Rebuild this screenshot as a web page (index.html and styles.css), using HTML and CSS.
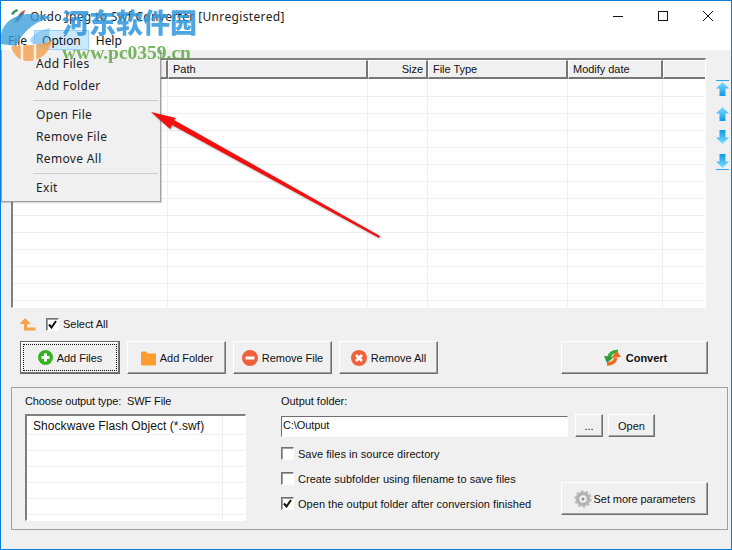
FILE: index.html
```html
<!DOCTYPE html>
<html lang="en">
<head>
<meta charset="utf-8">
<title>Okdo Jpeg to Swf Converter</title>
<link rel="stylesheet" href="styles.css">
</head>
<body>
<div class="window">
  <header class="titlebar">
    <svg class="app-icon" width="16" height="16" viewBox="0 0 16 16"><path d="M1 6 Q3 2 7 1 L8 3 Q5 4 3 7Z" fill="#2f9a5a"/><path d="M5 12 L11 4 L14 6 L8 14Z" fill="#5a6a80"/><path d="M11 4 L15 2 L14 6Z" fill="#c9503c"/><path d="M5 12 L3 15 L8 14Z" fill="#e0a040"/></svg>
    <span class="title">Okdo Jpeg to Swf Converter [Unregistered]</span>
    <div class="win-controls">
      <svg class="win-btn" width="10" height="10" viewBox="0 0 10 10"><path d="M0 5.500H10" stroke="#111" fill="none"/></svg>
      <svg class="win-btn" width="10" height="10" viewBox="0 0 10 10"><rect x=".5" y=".5" width="9" height="9" stroke="#111" fill="none"/></svg>
      <svg class="win-btn" width="10" height="10" viewBox="0 0 10 10"><path d="M0 0L10 10M10 0L0 10" stroke="#111" fill="none"/></svg>
    </div>
  </header>
  <nav class="menubar">
    <span class="menu-item">File</span>
    <span class="menu-item is-open">Option</span>
    <span class="menu-item">Help</span>
  </nav>
  <main class="main">
    <section class="list-row">
      <div class="file-list">
        <div class="list-head">
          <div class="col col-name"></div>
          <div class="col col-path">Path</div>
          <div class="col col-size">Size</div>
          <div class="col col-type">File Type</div>
          <div class="col col-date">Modify date</div>
          <div class="col col-rest"></div>
        </div>
        <div class="list-body">
          <div class="cell col-name"></div>
          <div class="cell col-path"></div>
          <div class="cell col-size"></div>
          <div class="cell col-type"></div>
          <div class="cell col-date"></div>
          <div class="cell col-rest"></div>
        </div>
      </div>
      <div class="move-btns">
        <svg width="13" height="17" viewBox="0 0 13 17"><defs><linearGradient id="up" x1="0" y1="0" x2="0" y2="1"><stop offset="0" stop-color="#7fe0ff"/><stop offset="1" stop-color="#0f97ea"/></linearGradient></defs><path d="M0 .5H13" stroke="#2aa8ee"/><path d="M6.500 2L13 8.500H9.500V16H3.500V8.500H0Z" fill="url(#up)"/></svg>
        <svg width="13" height="16" viewBox="0 0 13 16"><path d="M6.500 1L13 7.500H9.500V15H3.500V7.500H0Z" fill="url(#up)"/></svg>
        <svg width="13" height="16" viewBox="0 0 13 16"><defs><linearGradient id="dn" x1="0" y1="0" x2="0" y2="1"><stop offset="0" stop-color="#0f97ea"/><stop offset="1" stop-color="#7fe0ff"/></linearGradient></defs><path d="M6.500 15L13 8.500H9.500V1H3.500V8.500H0Z" fill="url(#dn)"/></svg>
        <svg width="13" height="17" viewBox="0 0 13 17"><path d="M6.500 15L13 8.500H9.500V1H3.500V8.500H0Z" fill="url(#dn)"/><path d="M0 16.500H13" stroke="#2aa8ee"/></svg>
      </div>
    </section>

    <div class="select-row">
      <svg width="17" height="13" viewBox="0 0 17 13"><path d="M6 0L12 6H8V9.500H16.500V12.500H5V6H0.500Z" fill="#f9a24c"/></svg>
      <label class="check"><span class="box is-checked"><svg width="9" height="9" viewBox="0 0 9 9"><path d="M1 4.500L3.500 7.500L8 1" stroke="#111" stroke-width="2" fill="none"/></svg></span>Select All</label>
    </div>

    <div class="action-row">
      <div class="btn-group">
        <button class="btn btn-default"><span class="focus"><svg width="15" height="15" viewBox="0 0 15 15"><circle cx="7.500" cy="7.500" r="7.500" fill="#35b21f"/><path d="M7.500 3.500V11.500M3.500 7.500H11.500" stroke="#fff" stroke-width="3"/></svg>Add Files</span></button>
        <button class="btn"><svg width="16" height="16" viewBox="0 0 16 16"><path d="M1 2.500Q1 1.500 2 1.500H6L7.500 3.500H15Q16 3.500 16 4.500V14.500Q16 15.500 15 15.500H2Q1 15.500 1 14.500Z" fill="#fb9d2f"/></svg>Add Folder</button>
        <button class="btn"><svg width="16" height="16" viewBox="0 0 16 16"><circle cx="8" cy="8" r="8" fill="#f0603a"/><path d="M3.500 8H12.500" stroke="#fff" stroke-width="3"/></svg>Remove File</button>
        <button class="btn"><svg width="16" height="16" viewBox="0 0 16 16"><circle cx="8" cy="8" r="8" fill="#f0603a"/><path d="M5 5L11 11M11 5L5 11" stroke="#fff" stroke-width="2.800"/></svg>Remove All</button>
      </div>
      <button class="btn btn-wide btn-bold"><svg width="20" height="19" viewBox="0 0 20 19"><path d="M16 3.500Q9 3 7 9" stroke="#2fae3a" stroke-width="3.500" fill="none"/><path d="M2 8L12 9L5 15Z" fill="#2a9c36"/><path d="M5 16Q12 16 14 10" stroke="#ee6a1e" stroke-width="3.500" fill="none"/><path d="M9 10L19 9L15 3Z" fill="#ee6a1e"/></svg>Convert</button>
    </div>

    <section class="group">
      <div class="output-type">
        <div class="group-label">Choose output type:&nbsp; SWF File</div>
        <div class="type-list">
          <div class="type-col">Shockwave Flash Object (*.swf)</div>
          <div class="type-rest"></div>
        </div>
      </div>
      <div class="output-opts">
        <div class="group-label">Output folder:</div>
        <div class="folder-row">
          <div class="folder-input">C:\Output</div>
          <button class="btn btn-small btn-dots">...</button>
          <button class="btn btn-small btn-open">Open</button>
        </div>
        <div class="opts-bottom">
          <div class="checks">
            <label class="check"><span class="box"></span>Save files in source directory</label>
            <label class="check"><span class="box"></span>Create subfolder using filename to save files</label>
            <label class="check"><span class="box is-checked"><svg width="9" height="9" viewBox="0 0 9 9"><path d="M1 4.500L3.500 7.500L8 1" stroke="#111" stroke-width="2" fill="none"/></svg></span>Open the output folder after conversion finished</label>
          </div>
          <button class="btn btn-wide btn-params"><svg width="18" height="18" viewBox="0 0 18 18"><circle cx="9" cy="9" r="5.500" fill="none" stroke="#b4b4b4" stroke-width="3.500"/><circle cx="9" cy="9" r="7.800" fill="none" stroke="#bdbdbd" stroke-width="2" stroke-dasharray="2.500 2.400"/><circle cx="9" cy="9" r="1.500" fill="#8d8d8d"/></svg>Set more parameters</button>
        </div>
      </div>
    </section>
  </main>

  <div class="drop-menu">
    <div class="drop-item">Add Files</div>
    <div class="drop-item">Add Folder</div>
    <div class="drop-sep"></div>
    <div class="drop-item">Open File</div>
    <div class="drop-item">Remove File</div>
    <div class="drop-item">Remove All</div>
    <div class="drop-sep"></div>
    <div class="drop-item">Exit</div>
  </div>

  <svg class="red-arrow" width="240" height="135" viewBox="0 0 240 135"><path d="M1 1L26 7L24 9L230 125L229 127L22 14L20 18Z" fill="#f01010"/></svg>

  <svg class="wm-logo" width="62" height="62" viewBox="0 0 62 62"><path d="M1 44C-2 28 10 14 30 14C38 14 45 15 52 18C38 20 25 28 16 46Z" fill="#3d9ddc" opacity=".8"/><path d="M30 40C33 34 40 30 50 28L47 50L34 46Z" fill="#5aaee4" opacity=".5"/><path d="M11 47C20 43 38 48 52 40C50 53 40 61 28 61C19 61 14 55 11 47Z" fill="#f3a456" opacity=".85"/><path d="M22 44V61M35 44V61" stroke="#fff" stroke-width="2.500" opacity=".8"/></svg>
  <div class="wm-cn">河东软件园</div>
  <div class="wm-url">www.pc0359.cn</div>
</div>
</body>
</html>
```
FILE: styles.css
```css
* { box-sizing: border-box; }
html, body { margin: 0; padding: 0; }
body { width: 732px; height: 550px; overflow: hidden; font-family: "Liberation Sans", Arial, sans-serif; font-size: 11px; letter-spacing: -.03px; color: #111; }

.window { position: relative; width: 732px; height: 550px; border: 1px solid #0b7fd6; display: flex; flex-direction: column; background: #f0f0f0; overflow: hidden; }

.titlebar { height: 29px; flex: none; background: #fff; display: flex; align-items: center; padding-left: 9px; padding-top: 1px; }
.app-icon { margin-right: 4px; }
.title { font-family: "Noto Sans", sans-serif; font-size: 12px; letter-spacing: .35px; color: #222; white-space: nowrap; }
.win-controls { margin-left: auto; display: flex; gap: 35px; padding-right: 18px; }
.win-btn { display: block; }

.menubar { height: 20px; flex: none; background: #fff; display: flex; font-family: "Noto Sans", sans-serif; font-size: 12px; }
.menu-item { padding: 1px 6px 0; line-height: 18px; border: 1px solid transparent; }
.menu-item.is-open { padding: 1px 7px 0; background: #cce8ff; border-color: #99d1ff; }

.main { flex: 1; padding: 8px 0 0 10px; display: flex; flex-direction: column; }

.list-row { display: flex; height: 250px; flex: none; }
.file-list { width: 695px; height: 250px; flex: none; display: flex; flex-direction: column; background: #fff; border-style: solid; border-width: 2px 1px 1px 2px; border-color: #808080 #fff #fff #808080; }
.list-head { display: flex; height: 19px; flex: none; background: #f0f0f0; }
.col { height: 19px; padding-left: 4px; line-height: 16px; border-style: solid; border-width: 1px 2px 2px 0; border-color: #fff #777 #777 #fff; border-left: 1px solid #fff; white-space: nowrap; }
.col-name { width: 155px; }
.col-path { width: 200px; }
.col-size { width: 60px; text-align: right; padding-right: 3px; }
.col-type { width: 140px; }
.col-date { width: 95px; }
.col-rest { flex: 1; border-right: 0; }
.list-body { flex: 1; display: flex; margin-top: 1px; background: repeating-linear-gradient(to bottom, #fff 0, #fff 16px, #efefef 16px, #efefef 17px); }
.cell { height: 100%; border-right: 1px solid #efefef; }
.cell.col-rest { border-right: 0; }

.move-btns { width: 13px; flex: none; margin-left: 10px; padding-top: 22px; display: flex; flex-direction: column; align-items: flex-start; }
.move-btns svg { display: block; }
.move-btns svg:nth-child(2) { margin-top: 9px; }
.move-btns svg:nth-child(3) { margin-top: 7px; }
.move-btns svg:nth-child(4) { margin-top: 8px; }

.select-row { display: flex; align-items: center; height: 16px; margin: 8px 0 0 8px; }
.select-row .check { margin-left: 10px; }
.check { display: flex; align-items: center; white-space: nowrap; }
.box { width: 13px; height: 13px; margin-right: 4px; flex: none; display: flex; align-items: center; justify-content: center; background: #fff; border-style: solid; border-width: 1px; border-color: #707070 #fff #fff #707070; box-shadow: inset 1px 1px 0 #a0a0a0; }
.box.is-checked svg { display: block; }

.action-row { display: flex; justify-content: space-between; margin-top: 9px; padding: 0 23px 0 9px; height: 33px; flex: none; }
.btn-group { display: flex; gap: 7px; }
.btn { width: 99px; height: 33px; padding: 0; display: inline-flex; align-items: center; justify-content: center; gap: 4px; font: inherit; letter-spacing: inherit; color: #111; background: #f0f0f0; border-style: solid; border-width: 1px; border-color: #fff #6e6e6e #6e6e6e #fff; box-shadow: inset -1px -1px 0 #a0a0a0; }
.btn svg { flex: none; }
.btn-default { width: 100px; border: 1px solid #666; box-shadow: inset -1px -1px 0 #777, inset 1px 1px 0 #fff; padding: 2px; }
.focus { width: 100%; height: 100%; border: 1px dotted #111; display: flex; align-items: center; justify-content: center; gap: 4px; }
.btn-wide { width: 147px; }
.btn-bold { font-weight: 700; }

.group { margin-top: 13px; width: 717px; height: 143px; flex: none; display: flex; border: 1px solid #a0a0a0; }
.output-type { width: 256px; padding: 7px 0 0 13px; flex: none; }
.group-label { height: 13px; line-height: 13px; }
.output-type .group-label { letter-spacing: -.12px; }
.type-list { width: 221px; height: 107px; margin-top: 6px; display: flex; background: repeating-linear-gradient(to bottom, #fff 0, #fff 15px, #efefef 15px, #efefef 16px); background-position: 0 3px; border-style: solid; border-width: 2px 1px 1px 2px; border-color: #808080 #fff #fff #808080; }
.type-col { width: 196px; padding: 3px 0 0 6px; font-size: 12px; letter-spacing: .06px; line-height: 14px; border-right: 1px solid #efefef; white-space: nowrap; }

.output-opts { width: 427px; margin-left: 13px; padding-top: 7px; flex: none; }
.folder-row { display: flex; align-items: flex-start; margin-top: 6px; }
.folder-input { width: 287px; height: 21px; margin-top: 2px; padding-left: 1px; line-height: 17px; letter-spacing: -.1px; background: #fff; border-style: solid; border-width: 1px; border-color: #707070 #fff #fff #707070; }
.btn-small { height: 23px; gap: 0; }
.btn-dots { width: 28px; margin-left: 7px; }
.btn-open { width: 47px; margin-left: 5px; }
.opts-bottom { display: flex; justify-content: space-between; align-items: flex-start; }
.checks { display: flex; flex-direction: column; gap: 12px; margin-top: 10px; letter-spacing: .03px; }
.checks .check { height: 13px; }
.btn-params { margin-top: 45px; gap: 2px; letter-spacing: -.08px; }

.drop-menu { position: absolute; left: 0; top: 49px; width: 160px; height: 152px; padding: 3px 1px 0 1px; background: #f0f0f0; border-style: solid; border-width: 0 1px 1px 1px; border-color: #a0a0a0; font-family: "Noto Sans", sans-serif; font-size: 12px; letter-spacing: .33px; box-shadow: 1px 1px 1px rgba(0,0,0,.15); }
.drop-item { height: 22px; line-height: 22px; padding-left: 33px; color: #222; }
.drop-sep { height: 1px; margin: 3px 1px 3px 30px; background: #ccc; }

.red-arrow { position: absolute; left: 149px; top: 110px; filter: drop-shadow(1px 1px 1px rgba(0,0,0,.3)); }

.wm-logo { position: absolute; left: -1px; top: -1px; }
.wm-cn { position: absolute; left: 61px; top: 3px; font-family: "Noto Sans CJK SC", sans-serif; font-weight: 900; font-size: 27px; line-height: 36px; color: #2f97dc; opacity: .85; white-space: nowrap; }
.wm-url { position: absolute; left: 61px; top: 42px; font-family: "Liberation Serif", serif; font-weight: 700; font-size: 19.5px; line-height: 20px; letter-spacing: 0; color: #5faa46; opacity: .85; white-space: nowrap; }
```
